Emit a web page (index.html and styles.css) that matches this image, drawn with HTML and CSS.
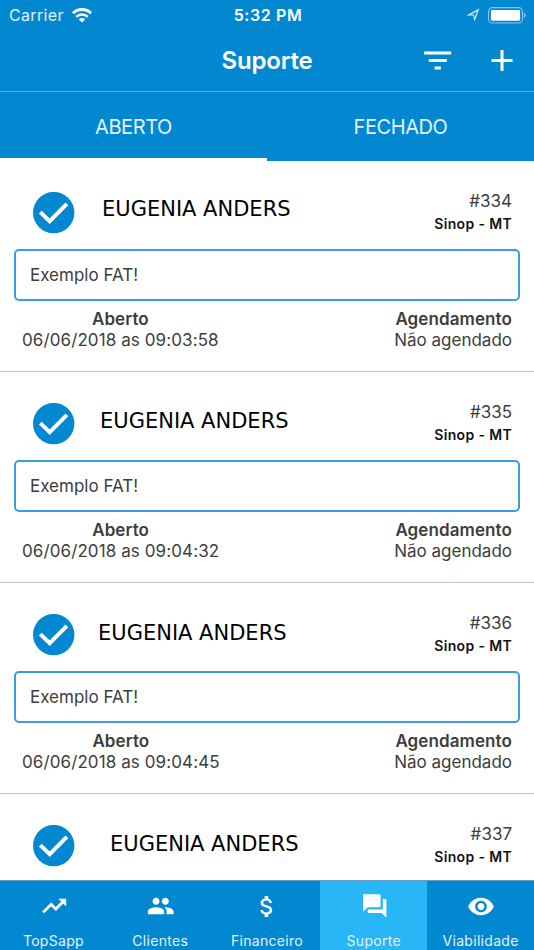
FILE: index.html
```html
<!DOCTYPE html>
<html lang="pt-BR">
<head>
    <meta charset="UTF-8">
    <meta name="viewport" content="width=device-width, initial-scale=1.0">
    <title>Suporte</title>
    <link rel="stylesheet" href="styles.css">
</head>
<body>

<div class="app">
    <header class="header">
        <div class="status-bar">
            <div class="carrier">
                <span>Carrier</span>
                <svg class="wifi" width="20" height="15" viewBox="0 0 20 15">
                    <path d="M1 5.2a12.8 12.8 0 0 1 18 0" fill="none" stroke="#fff" stroke-width="2.9"/>
                    <path d="M4.2 8.8a8.2 8.2 0 0 1 11.6 0" fill="none" stroke="#fff" stroke-width="2.5"/>
                    <path d="M6.9 11.5a4.5 4.5 0 0 1 6.2 0L10 14.6z" fill="#fff"/>
                </svg>
            </div>
            <div class="time">5:32 PM</div>
            <div class="indicators">
                <svg class="location" width="14" height="14" viewBox="0 0 14 14">
                    <path d="M.4 7.4 13.2.6 8.6 13.6 7.2 7.6zM4.4 6.7 8 6.6 8.6 9.7 11.1 3.2z" fill="#e3f2fb" fill-rule="evenodd"/>
                </svg>
                <svg class="battery" width="38" height="17" viewBox="0 0 38 17">
                    <rect x=".6" y=".6" width="33.8" height="15.4" rx="3.8" fill="none" stroke="#8ac8ea" stroke-width="1.1"/>
                    <rect x="2.9" y="2.9" width="29.2" height="10.8" rx="1.4" fill="#fff"/>
                    <path d="M35.8 5.6q1.8.8 1.8 2.7t-1.8 2.7z" fill="#8ac8ea"/>
                </svg>
            </div>
        </div>
        <div class="nav-bar">
            <h1>Suporte</h1>
            <div class="actions">
                <svg width="28" height="20" viewBox="0 0 28 20">
                    <path d="M.2 .5h27v3H.2zM4.8 8h18v3h-18zM10.6 15.5h6.2v3h-6.2z" fill="#fff"/>
                </svg>
                <svg width="22" height="22" viewBox="0 0 22 22">
                    <path d="M9.5 0h3v9h9v3h-9v9h-3v-9h-9V9h9z" fill="#fff"/>
                </svg>
            </div>
        </div>
        <div class="segments">
            <div class="segment active">ABERTO</div>
            <div class="segment">FECHADO</div>
        </div>
    </header>

    <main class="tickets">
        <article class="ticket">
            <div class="ticket-head">
                <svg class="check" width="42" height="42" viewBox="0 0 42 42">
                    <circle cx="20.7" cy="20.6" r="20.7" fill="#0288d1"/>
                    <path d="M7.3 20.1 16.7 29.1 33.9 11.8" fill="none" stroke="#fff" stroke-width="4"/>
                </svg>
                <div class="name name-334">EUGENIA ANDERS</div>
                <div class="origin">
                    <div class="number">#334</div>
                    <div class="city">Sinop - MT</div>
                </div>
            </div>
            <div class="message">Exemplo FAT!</div>
            <div class="dates">
                <div class="opened">
                    <strong>Aberto</strong>
                    <span>06/06/2018 as 09:03:58</span>
                </div>
                <div class="scheduled">
                    <strong>Agendamento</strong>
                    <span>Não agendado</span>
                </div>
            </div>
        </article>

        <article class="ticket">
            <div class="ticket-head">
                <svg class="check" width="42" height="42" viewBox="0 0 42 42">
                    <circle cx="20.7" cy="20.6" r="20.7" fill="#0288d1"/>
                    <path d="M7.3 20.1 16.7 29.1 33.9 11.8" fill="none" stroke="#fff" stroke-width="4"/>
                </svg>
                <div class="name name-335">EUGENIA ANDERS</div>
                <div class="origin">
                    <div class="number">#335</div>
                    <div class="city">Sinop - MT</div>
                </div>
            </div>
            <div class="message">Exemplo FAT!</div>
            <div class="dates">
                <div class="opened">
                    <strong>Aberto</strong>
                    <span>06/06/2018 as 09:04:32</span>
                </div>
                <div class="scheduled">
                    <strong>Agendamento</strong>
                    <span>Não agendado</span>
                </div>
            </div>
        </article>

        <article class="ticket">
            <div class="ticket-head">
                <svg class="check" width="42" height="42" viewBox="0 0 42 42">
                    <circle cx="20.7" cy="20.6" r="20.7" fill="#0288d1"/>
                    <path d="M7.3 20.1 16.7 29.1 33.9 11.8" fill="none" stroke="#fff" stroke-width="4"/>
                </svg>
                <div class="name name-336">EUGENIA ANDERS</div>
                <div class="origin">
                    <div class="number">#336</div>
                    <div class="city">Sinop - MT</div>
                </div>
            </div>
            <div class="message">Exemplo FAT!</div>
            <div class="dates">
                <div class="opened">
                    <strong>Aberto</strong>
                    <span>06/06/2018 as 09:04:45</span>
                </div>
                <div class="scheduled">
                    <strong>Agendamento</strong>
                    <span>Não agendado</span>
                </div>
            </div>
        </article>

        <article class="ticket">
            <div class="ticket-head">
                <svg class="check" width="42" height="42" viewBox="0 0 42 42">
                    <circle cx="20.7" cy="20.6" r="20.7" fill="#0288d1"/>
                    <path d="M7.3 20.1 16.7 29.1 33.9 11.8" fill="none" stroke="#fff" stroke-width="4"/>
                </svg>
                <div class="name name-337">EUGENIA ANDERS</div>
                <div class="origin">
                    <div class="number">#337</div>
                    <div class="city">Sinop - MT</div>
                </div>
            </div>
        </article>
    </main>

    <nav class="tab-bar">
        <div class="tab">
            <svg width="28" height="28" viewBox="-1 0 24 24"><path d="M16 6l2.29 2.29-4.88 4.88-4-4L2 16.59 3.41 18l6-6 4 4 6.3-6.29L22 12V6z" stroke="#fff" stroke-width=".5"/></svg>
            <span>TopSapp</span>
        </div>
        <div class="tab">
            <svg width="28" height="28" viewBox="-.6 0 24 24"><path d="M16 11c1.66 0 2.99-1.34 2.99-3S17.66 5 16 5s-3 1.34-3 3 1.34 3 3 3zm-8 0c1.66 0 2.99-1.34 2.99-3S9.66 5 8 5 5 6.34 5 8s1.34 3 3 3zm0 2c-2.33 0-7 1.17-7 3.5V19h14v-2.5c0-2.33-4.67-3.5-7-3.5zm8 0c-.29 0-.62.02-.97.05 1.16.84 1.97 1.97 1.97 3.45V19h6v-2.5c0-2.33-4.67-3.5-7-3.5z"/></svg>
            <span>Clientes</span>
        </div>
        <div class="tab">
            <svg width="28" height="28" viewBox="0 -.4 24 24"><path d="M11.8 10.9c-2.27-.59-3-1.2-3-2.15 0-1.09 1.01-1.85 2.7-1.85 1.78 0 2.44.85 2.5 2.1h2.21c-.07-1.72-1.12-3.3-3.21-3.81V3h-3v2.16c-1.94.42-3.5 1.68-3.5 3.61 0 2.31 1.91 3.46 4.7 4.13 2.5.6 3 1.48 3 2.41 0 .69-.49 1.79-2.7 1.79-2.06 0-2.87-.92-2.98-2.1h-2.2c.12 2.19 1.76 3.42 3.68 3.83V21h3v-2.15c1.95-.37 3.5-1.5 3.5-3.55 0-2.84-2.43-3.81-4.7-4.4z"/></svg>
            <span>Financeiro</span>
        </div>
        <div class="tab selected">
            <svg width="28" height="28" viewBox="-.6 0 24 24"><path d="M21 6h-2v9H6v2c0 .55.45 1 1 1h11l4 4V7c0-.55-.45-1-1-1zm-4 6V3c0-.55-.45-1-1-1H3c-.55 0-1 .45-1 1v14l4-4h10c.55 0 1-.45 1-1z"/></svg>
            <span>Suporte</span>
        </div>
        <div class="tab">
            <svg width="28" height="28" viewBox="0 -.4 24 24"><path d="M12 4.5C7 4.5 2.73 7.61 1 12c1.73 4.39 6 7.5 11 7.5s9.27-3.11 11-7.5c-1.73-4.39-6-7.5-11-7.5zM12 17c-2.76 0-5-2.24-5-5s2.24-5 5-5 5 2.24 5 5-2.24 5-5 5zm0-8c-1.66 0-3 1.34-3 3s1.34 3 3 3 3-1.34 3-3-1.34-3-3-3z"/></svg>
            <span>Viabilidade</span>
        </div>
    </nav>
</div>

</body>
</html>
```
FILE: styles.css
```css
* {
    box-sizing: border-box;
}

body {
    margin: 0;
    font-family: Inter, "Liberation Sans", sans-serif;
    background: #fff;
}

.app {
    display: flex;
    flex-direction: column;
    height: 950px;
    overflow: hidden;
}

.app svg {
    display: block;
    flex-shrink: 0;
}

/* header */
.header {
    height: 161px;
    flex-shrink: 0;
    background: #0288d1;
    color: #fff;
}

.status-bar {
    display: grid;
    grid-template-columns: 1fr auto 1fr;
    align-items: center;
    height: 30px;
    padding: 0 8px 0 9px;
    font-size: 16px;
    line-height: 20px;
}

.carrier {
    display: flex;
    align-items: center;
    gap: 8px;
    color: #e3f2fb;
    letter-spacing: 0.35px;
}

.time {
    padding-left: 1px;
    font-weight: 600;
    letter-spacing: 0.6px;
}

.indicators {
    display: flex;
    align-items: center;
    justify-content: flex-end;
    gap: 8px;
}

.nav-bar {
    display: grid;
    grid-template-columns: 1fr auto 1fr;
    align-items: center;
    height: 62px;
    padding: 0 21px;
    border-bottom: 1px solid #6aa6c8;
}

.nav-bar h1 {
    grid-column: 2;
    margin: 0;
    font-size: 24px;
    line-height: 30px;
    font-weight: 600;
    letter-spacing: -0.2px;
}

.actions {
    display: flex;
    align-items: center;
    justify-content: flex-end;
    gap: 39px;
}

.segments {
    display: flex;
    height: 69px;
}

.segment {
    flex: 1;
    border-bottom: 3px solid transparent;
    text-align: center;
    font-size: 20px;
    line-height: 70px;
    color: #e3f2fb;
    letter-spacing: -0.4px;
}

.segment.active {
    border-bottom-color: #fff;
}

/* tickets */
.tickets {
    flex: 1;
    min-height: 0;
    overflow: hidden;
}

.ticket {
    height: 210.9px;
    padding: 27px 14px 0;
    border-bottom: 1px solid #c4c4c4;
    color: #3d3d3d;
}

.ticket-head {
    display: flex;
    height: 61px;
    padding: 0 8px 0 19px;
}

.check {
    margin-top: 4px;
}

.name {
    flex: 1;
    font-family: "DejaVu Sans", Verdana, sans-serif;
    font-size: 21px;
    line-height: 24px;
    color: #000;
    white-space: nowrap;
}

.name-334 {
    padding: 9px 0 0 27px;
}

.name-335 {
    padding: 10px 0 0 25px;
}

.name-336 {
    padding: 11px 0 0 23px;
}

.name-337 {
    padding: 11px 0 0 35px;
}

.origin {
    text-align: right;
}

.number {
    font-size: 17px;
    line-height: 26px;
}

.city {
    font-size: 14px;
    line-height: 19px;
    font-weight: 600;
    color: #111;
    letter-spacing: 0.35px;
}

.message {
    height: 52px;
    padding-left: 14px;
    border: 2px solid #3a9ddc;
    border-radius: 5px;
    font-size: 17px;
    line-height: 49px;
}

.dates {
    display: flex;
    justify-content: space-between;
    padding: 8px 8px 0;
    font-size: 17px;
    line-height: 21px;
}

.dates strong,
.dates span {
    display: block;
}

.dates strong {
    font-weight: 600;
    letter-spacing: 0.1px;
}

.opened {
    text-align: center;
    letter-spacing: 0.1px;
}

.scheduled {
    text-align: right;
}

/* bottom tabs */
.tab-bar {
    display: flex;
    height: 70px;
    flex-shrink: 0;
    border-top: 1px solid #5f9fc4;
    background: #0288d1;
}

.tab {
    flex: 1;
    display: flex;
    flex-direction: column;
    align-items: center;
    padding-top: 11px;
    color: #e3f2fb;
    font-size: 14px;
    line-height: 18px;
    letter-spacing: 0.3px;
}

.tab svg {
    margin-bottom: 12px;
    fill: #fff;
}

.tab.selected {
    background: #29b6f6;
}
```
